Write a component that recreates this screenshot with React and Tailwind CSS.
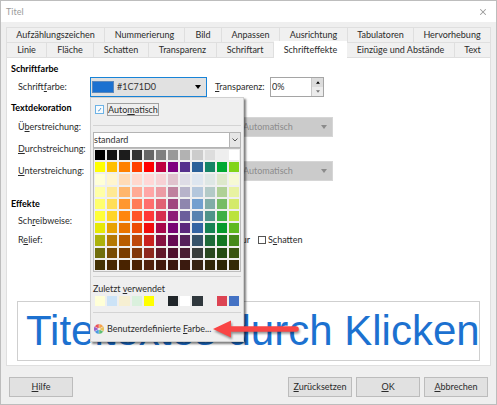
import { useState } from 'react';
import { X } from 'lucide-react';

const TABS_TOP = ['Aufzählungszeichen', 'Nummerierung', 'Bild', 'Anpassen', 'Ausrichtung', 'Tabulatoren', 'Hervorhebung'];
const TABS_BOTTOM = ['Linie', 'Fläche', 'Schatten', 'Transparenz', 'Schriftart', 'Schrifteffekte', 'Einzüge und Abstände', 'Text'];

const PALETTE = [
  ['#000000', '#111111', '#1c1c1c', '#333333', '#666666', '#808080', '#999999', '#b2b2b2', '#cccccc', '#dddddd', '#eeeeee', '#ffffff'],
  ['#ffff00', '#ffbf00', '#ff8000', '#ff4000', '#ff0000', '#bf0041', '#800080', '#55308d', '#2a6099', '#158466', '#00a933', '#81d41a'],
  ['#ffffd7', '#fff5ce', '#ffdbb6', '#ffd8ce', '#ffd7d7', '#f7d1d5', '#e0c2cd', '#dedce6', '#dee6ef', '#dee7e5', '#dde8cb', '#f6f9d4'],
  ['#ffffa6', '#ffe994', '#ffb66c', '#ffaa95', '#ffa6a6', '#ec9ba4', '#bf819e', '#b7b3ca', '#b4c7dc', '#b3cac7', '#afd095', '#e8f2a1'],
  ['#ffff6d', '#ffde59', '#ff972f', '#ff7b59', '#ff6d6d', '#e16173', '#a1467e', '#8e86ae', '#729fcf', '#81aca6', '#77bc65', '#d4ea6b'],
  ['#ffff38', '#ffd428', '#ff860d', '#ff5429', '#ff3838', '#d62e4e', '#8d1d75', '#6b5e9b', '#5983b0', '#50938a', '#3faf46', '#bbe33d'],
  ['#e6e905', '#e8a202', '#ea7500', '#ed4c05', '#f10d0c', '#a7074b', '#780373', '#5b277d', '#3465a4', '#168253', '#069a2e', '#5eb91e'],
  ['#acb20c', '#b47804', '#b85c00', '#be480a', '#c9211e', '#861141', '#650953', '#55215b', '#355269', '#1e6a39', '#127622', '#468a1a'],
  ['#706e0c', '#784b04', '#7b3d00', '#813709', '#8d281e', '#611729', '#4e102d', '#481d32', '#383d3c', '#28471f', '#224b12', '#395511'],
  ['#443205', '#472702', '#492300', '#4b2204', '#50200c', '#41190d', '#3b160e', '#3a1a0f', '#362413', '#302709', '#2e2706', '#342a06'],
];

// null leaves an empty slot in the strip
const RECENT = ['#ffffd7', '#cce3f7', '#f6efd2', '#daf0dd', '#ffff00', null, '#20262a', '#ffffff', '#30383d', null, '#dc4453', '#4472c4'];

const Arrow = ({ className }) => (
  <svg viewBox="0 0 6 4" className={className} aria-hidden="true">
    <path d="M0 0h6L3 4z" fill="currentColor" />
  </svg>
);

const Tab = ({ label, active, onSelect }) => (
  <button
    type="button"
    role="tab"
    aria-selected={active}
    onClick={() => onSelect(label)}
    className={
      active
        ? 'z-10 -mt-px -mb-px whitespace-nowrap bg-white'
        : 'whitespace-nowrap border-t border-r border-[#dfdfdf] bg-[#f0f0f0]'
    }
  >
    {label}
  </button>
);

const DisabledSelect = ({ id, label, value, className }) => (
  <div className={`relative ${className}`}>
    <select
      id={id}
      aria-label={label}
      disabled
      className="h-5 w-full appearance-none border border-[#d6d6d6] bg-[#cbcbcb] pl-1 text-[#8b8b8b] opacity-100"
    >
      <option>{value}</option>
    </select>
    <Arrow className="absolute top-2 right-1.5 h-1 w-1.5 text-[#8b8b8b]" />
  </div>
);

const ColorWheel = () => (
  <svg viewBox="-10 -10 20 20" className="h-2.5 w-2.5" aria-hidden="true">
    <path d="M0 0V-10A10 10 0 0 1 8.7-5Z" fill="#f6a34b" />
    <path d="M0 0L8.7-5A10 10 0 0 1 8.7 5Z" fill="#e9c25a" />
    <path d="M0 0L8.7 5A10 10 0 0 1 0 10Z" fill="#5fbf72" />
    <path d="M0 0V10A10 10 0 0 1-8.7 5Z" fill="#4b9be0" />
    <path d="M0 0L-8.7 5A10 10 0 0 1-8.7-5Z" fill="#9a62c7" />
    <path d="M0 0L-8.7-5A10 10 0 0 1 0-10Z" fill="#ea5458" />
    <path d="M0-10V10M-8.7-5L8.7 5M-8.7 5L8.7-5" stroke="#efefef" strokeWidth="1" />
    <circle r="2" fill="#efefef" />
  </svg>
);

const Swatches = ({ colors }) =>
  colors.map((color, i) =>
    color ? (
      <button key={i} type="button" aria-label={color} style={{ backgroundColor: color }} />
    ) : (
      <span key={i} />
    )
  );

const ColorPopup = () => {
  const [auto, setAuto] = useState(true);

  return (
    <div className="absolute top-full left-0 z-20 w-[154px] border border-[#d0d0d0] bg-[#efefef] px-0.5 shadow-[2px_2px_2px_rgba(0,0,0,0.5)]">
      <label className="mt-1 flex h-3.5 items-center gap-[3px] pl-0.5">
        <span className="relative flex">
          <input
            type="checkbox"
            checked={auto}
            onChange={(e) => setAuto(e.target.checked)}
            className="h-[9px] w-[9px] appearance-none border border-[#6db3e6] bg-[#f7fbfe]"
          />
          {auto && (
            <svg viewBox="0 0 9 9" className="pointer-events-none absolute inset-0 h-[9px] w-[9px]" aria-hidden="true">
              <path d="M3 5.4l.8.7L6 3" fill="none" stroke="#3f8fcd" strokeWidth="0.9" />
            </svg>
          )}
        </span>
        <span className="border border-[#a0a0a0] leading-[11px]">
          Auto<u>m</u>atisch
        </span>
      </label>

      <hr className="mt-[9px] border-[#d4d4d4]" />

      <div className="relative mt-1.5">
        <select aria-label="Palette" className="block h-4 w-full appearance-none border border-[#b4b4b4] bg-white text-[#333]">
          <option>standard</option>
        </select>
        <span className="pointer-events-none absolute inset-y-0 right-0 flex w-3 items-center justify-center border border-[#b4b4b4] bg-[#e6e6e6]">
          <svg viewBox="0 0 6 4" className="h-1 w-1.5" aria-hidden="true">
            <path d="M.5 .5L3 3L5.5 .5" fill="none" stroke="#555" />
          </svg>
        </span>
      </div>

      <div className="grid h-[124px] auto-rows-fr grid-cols-12 gap-0.5 border border-[#bdbdbd] bg-[#efefef] p-px">
        {PALETTE.map((row, i) => (
          <Swatches key={i} colors={row} />
        ))}
      </div>

      <hr className="mt-1 border-[#d4d4d4]" />
      <p className="mt-1.5 leading-[12px]">
        Zuletzt <u>v</u>erwendet
      </p>
      <div className="mt-px grid h-2.5 grid-cols-12 gap-0.5 px-0.5">
        <Swatches colors={RECENT} />
      </div>
      <hr className="mt-1.5 border-[#d4d4d4]" />
      <button type="button" className="mt-2 mb-1 flex h-4 items-center gap-[3px] pl-px whitespace-nowrap">
        <ColorWheel />
        <span>
          Benutzerdefinierte <u>F</u>arbe...
        </span>
      </button>

      <svg
        viewBox="0 0 86 20"
        className="pointer-events-none absolute bottom-0.5 left-[122px] h-5 w-[86px] drop-shadow-[1px_2px_1px_rgba(0,0,0,0.4)]"
        aria-hidden="true"
      >
        <path d="M0 10L18 1.5V7.2H83A2 2 0 0 1 83 12.8H18V18.5Z" fill="#f94545" />
      </svg>
    </div>
  );
};

const FooterButton = ({ children }) => (
  <button type="button" className="h-5 w-16 border border-[#bcbcbc] bg-[#e1e1e1]">
    {children}
  </button>
);

const App = () => {
  const [tab, setTab] = useState('Schrifteffekte');
  const [opacity, setOpacity] = useState('0%');

  return (
    <div className="min-h-screen border-t border-r border-b-2 border-l border-[#bdbdbd] bg-[#efefef] font-['Lato','Open_Sans',sans-serif] text-[9px] leading-[14px] text-[#2b2b2b]">
      <header className="flex h-[21px] items-center justify-between bg-white pr-2 pl-[5px] text-[#9b9b9b]">
        <h1>Titel</h1>
        <button type="button" aria-label="Schließen">
          <X className="h-2.5 w-2.5" strokeWidth={2.5} />
        </button>
      </header>

      <main className="px-[5px] pt-[5px]">
        <div role="tablist" className="border-l border-[#dfdfdf]">
          <div className="grid h-[15px] grid-cols-[98fr_80fr_37fr_58fr_68fr_66fr_77fr]">
            {TABS_TOP.map((label) => (
              <Tab key={label} label={label} active={label === tab} onSelect={setTab} />
            ))}
          </div>
          <div className="grid h-[15px] grid-cols-[40fr_47fr_55fr_68fr_57fr_73fr_108fr_36fr]">
            {TABS_BOTTOM.map((label) => (
              <Tab key={label} label={label} active={label === tab} onSelect={setTab} />
            ))}
          </div>
        </div>

        <section className="border border-[#dfdfdf] bg-white px-1 pt-1 pb-1">
          <h2 className="font-bold text-black">Schriftfarbe</h2>
          <div className="mt-px flex h-5 items-center pl-[7px]">
            <label htmlFor="color" className="w-[72px]">
              Schrift<u>f</u>arbe:
            </label>
            <div className="relative w-[117px]">
              <select
                id="color"
                className="block h-5 w-full appearance-none border border-[#1883d7] bg-[#e1e1e1] pl-[26px] text-[#333] outline-none"
              >
                <option>#1C71D0</option>
              </select>
              <span className="pointer-events-none absolute top-1 left-0.5 h-3 w-[22px] border border-[#5c88bb] bg-[#1c71d0]" />
              <Arrow className="pointer-events-none absolute top-2 right-1.5 h-1 w-1.5 text-black" />
              <ColorPopup />
            </div>
            <label htmlFor="opacity" className="ml-2 w-[55px]">
              <u>T</u>ransparenz:
            </label>
            <div className="flex h-5 w-[54px] border border-[#a5a5a5] bg-white">
              <input
                id="opacity"
                value={opacity}
                onChange={(e) => setOpacity(e.target.value)}
                className="w-full min-w-0 pl-px outline-none"
              />
              <div className="flex w-3 shrink-0 flex-col border-l border-[#c8c8c8] bg-[#ececec]">
                <button type="button" aria-label="Erhöhen" className="flex flex-1 items-center justify-center bg-[#dcdcdc]">
                  <Arrow className="h-[3px] w-1 rotate-180 text-black" />
                </button>
                <button type="button" aria-label="Verringern" className="flex flex-1 items-center justify-center">
                  <Arrow className="h-[3px] w-1 text-[#777]" />
                </button>
              </div>
            </div>
          </div>

          <h2 className="mt-1 font-bold text-black">Textdekoration</h2>
          <div className="mt-0.5 space-y-0.5 pl-[7px]">
            <div className="flex h-5 items-center">
              <label htmlFor="overline" className="w-[72px]">
                Ü<u>b</u>erstreichung:
              </label>
              <DisabledSelect id="overline" value="(Ohne)" className="w-36" />
              <DisabledSelect id="overline-color" label="Farbe der Überstreichung" value="Automatisch" className="ml-1 w-[95px]" />
            </div>
            <div className="flex h-5 items-center">
              <label htmlFor="strike" className="w-[72px]">
                <u>D</u>urchstreichung:
              </label>
              <DisabledSelect id="strike" value="(Ohne)" className="w-36" />
            </div>
            <div className="flex h-5 items-center">
              <label htmlFor="underline" className="w-[72px]">
                <u>U</u>nterstreichung:
              </label>
              <DisabledSelect id="underline" value="(Ohne)" className="w-36" />
              <DisabledSelect id="underline-color" label="Farbe der Unterstreichung" value="Automatisch" className="ml-1 w-[95px]" />
            </div>
          </div>

          <h2 className="mt-4 font-bold text-black">Effekte</h2>
          <div className="mt-0.5 space-y-[3px] pl-[7px]">
            <div className="flex h-4 items-center">
              <label htmlFor="case" className="w-[72px]">
                Sch<u>r</u>eibweise:
              </label>
              <select id="case" className="h-4 w-28 appearance-none border border-[#bcbcbc] bg-[#e1e1e1]">
                <option>(Ohne)</option>
              </select>
            </div>
            <div className="flex h-4 items-center">
              <label htmlFor="relief" className="w-[72px]">
                R<u>e</u>lief:
              </label>
              <select id="relief" className="h-4 w-28 appearance-none border border-[#bcbcbc] bg-[#e1e1e1]">
                <option>(Ohne)</option>
              </select>
              <label className="flex w-12 items-center justify-end gap-0.5">
                <input type="checkbox" className="h-2 w-2 appearance-none border border-[#555] bg-white" />
                Kontur
              </label>
              <label className="ml-2 flex items-center gap-0.5">
                <input type="checkbox" className="h-2 w-2 appearance-none border border-[#555] bg-white" />
                <span>
                  S<u>c</u>hatten
                </span>
              </label>
            </div>
          </div>

          <div className="mx-1.5 mt-[53px] flex h-[60px] items-center overflow-hidden border border-[#cfcfcf] bg-white pl-2 font-['Liberation_Sans',Arial,sans-serif] text-[42px] leading-none whitespace-nowrap text-[#1c71d0]">
            Titeltextes durch Klicken
          </div>
        </section>
      </main>

      <footer className="flex gap-1 px-2 pt-[11px] pb-[7px]">
        <FooterButton>
          <u>H</u>ilfe
        </FooterButton>
        <div className="grow" />
        <FooterButton>
          <u>Z</u>urücksetzen
        </FooterButton>
        <FooterButton>
          <u>O</u>K
        </FooterButton>
        <FooterButton>
          <u>A</u>bbrechen
        </FooterButton>
      </footer>
    </div>
  );
};

export default App;
